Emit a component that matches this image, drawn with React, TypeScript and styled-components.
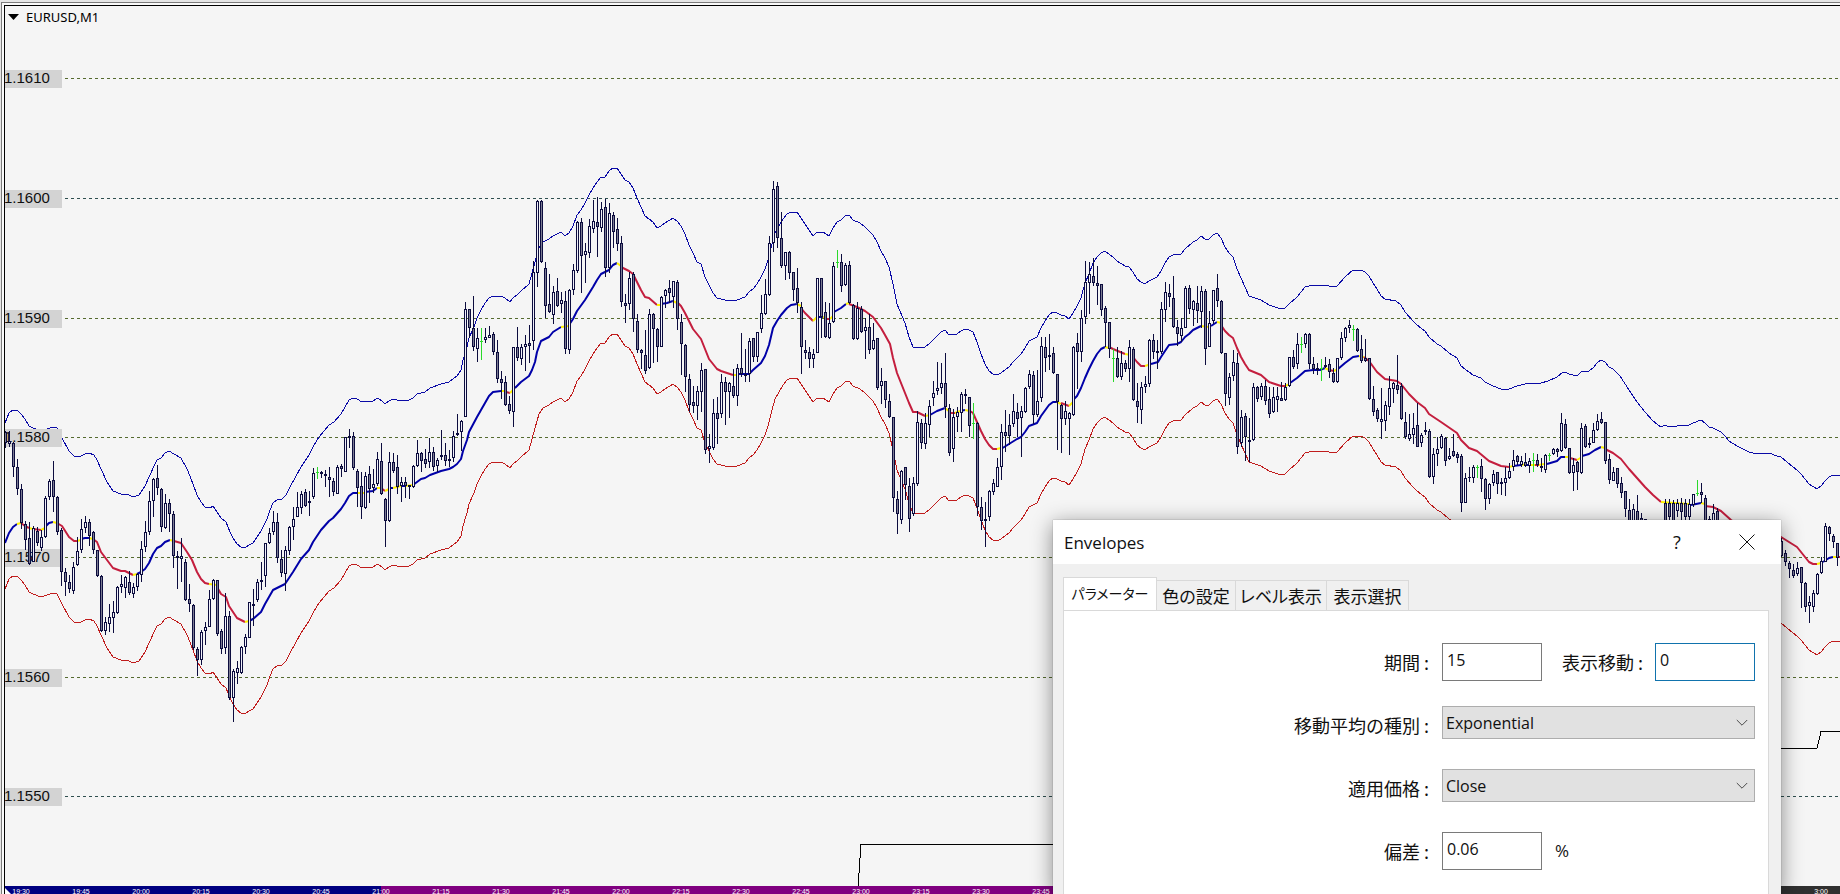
import React from 'react';
import styled, { createGlobalStyle } from 'styled-components';

const GlobalStyle = createGlobalStyle`
  * { box-sizing: border-box; }
  body {
    margin: 0;
    background: #e6e6e6;
    color: #101010;
    font-family: "Open Sans", "Noto Sans CJK JP", sans-serif;
    font-size: 16px;
  }
`;

/* ---------- chart data ---------- */

// Each bar is "high,bodyTop,bodyBottom,low" plus u (rising), d (falling) or g (doji, open = close).
type Run = { start: number; bars: string };

const RUNS: Run[] = [
  {
    start: 5,
    bars: `431,432,443,448d 431,441,444,447u 442,443,467,477d 459,467,489,495d 484,489,523,529d 521,524,540,550d
522,538,564,565d 526,528,562,562u 527,531,543,546d 530,537,548,551u 496,498,537,538u 479,481,497,500u 461,480,497,512d
496,497,532,535d 528,530,572,586d 568,572,582,596d 575,582,589,593d 562,567,591,594u 537,551,565,566u 519,529,550,553u
516,522,528,533u 519,522,536,546d 531,532,550,554d 550,550,576,577d 575,576,631,632d 617,622,631,635u 604,617,624,632u
601,612,618,633u 586,587,613,614u 575,584,587,593u 576,577,588,598u 571,582,593,595d 583,587,594,598u 573,574,587,591u
541,549,575,582u 521,532,547,552u 491,501,532,535u 478,479,501,517u 465,478,488,495d 488,489,527,532d 494,503,528,529u
499,503,514,532d 511,514,556,568d 551,556,558,589d 538,556,559,582u 559,562,600,601d 584,599,604,612d 604,605,648,650d
647,649,660,676d 630,632,660,665u 622,627,631,645u 590,599,627,627u 579,580,599,600u 580,580,634,636d 629,631,649,654d
593,616,648,654u 611,616,698,700d 669,671,698,722u 661,668,673,684u 646,647,673,674u 634,637,647,654u 602,602,638,638u
589,604,606,626d 579,582,600,602u 562,580,582,590u 543,543,576,587u 528,533,543,544u 511,522,532,535u 513,522,558,563d
550,559,573,577d 546,550,574,591u 526,527,551,555u 507,519,527,540u 492,507,517,517u 491,494,508,514u 489,492,506,507d
491,501,503,516u 468,473,497,499u 467,472,472,479g 471,472,474,478d 470,474,476,487d 467,477,480,497d 478,481,492,496d
465,467,494,494u 464,466,469,477d 437,437,472,472u 429,436,438,448d 432,436,468,470d 469,471,488,507d 472,486,507,519d
472,476,508,509u 466,474,489,503d 469,484,488,493u 452,459,484,486u 443,461,494,495d 498,499,521,547d 452,462,521,522u
453,462,471,473d 455,467,487,494d 477,482,486,502u 477,482,486,498d 485,485,487,499d 465,466,487,488u 440,453,466,467u`,
  },
  {
    start: 421,
    bars: `452,453,461,472d 449,459,464,468d 438,452,462,468u 447,452,467,471d 458,460,466,472u 430,455,457,460u
443,455,461,466d 450,459,461,467u 431,436,458,462u 414,433,435,436u 420,421,432,451u 302,309,417,417u 309,309,328,338d
296,328,347,351d 328,338,349,362u 328,341,341,360g 328,337,340,343u 326,335,338,338u 332,334,352,355d 340,352,379,383d
371,379,383,399d 376,382,405,406d 396,404,411,414d 347,347,412,427u 327,347,358,361d 344,347,359,365u 335,344,347,371u
325,343,346,363d 261,272,341,350u 200,201,273,287u 200,201,262,263d 262,268,306,318d 274,304,312,313d 286,292,315,324u
278,291,306,307d 292,300,304,313u 291,301,349,354d 289,290,350,354u 264,270,290,295u 221,222,271,273u 218,222,256,293d
243,251,255,283u 219,226,253,258u 200,221,229,233u 197,222,227,257d 202,209,228,232u 199,207,268,277d 203,213,268,273u
212,215,232,248d 218,229,244,251d 236,243,302,307d 294,303,306,323d 272,278,304,310u 272,274,319,332d 314,321,350,353d
349,350,353,369d 330,355,371,374d 309,314,368,369u 313,314,329,363d 328,329,347,362d 296,297,347,347u 289,290,296,308u
280,288,293,303d 281,281,297,308u 280,282,319,330d 314,322,344,375d 344,345,377,392d 374,379,405,412d 386,402,406,413d
386,391,406,420u 363,370,392,412u 369,369,450,454d 434,446,449,463u 399,413,448,450u 397,413,419,444d 374,382,414,418u
377,382,392,425d 382,383,392,418u 369,386,396,398d 364,368,396,406u 333,368,374,377d 349,374,376,382d 338,341,374,382u
338,338,357,362d 332,332,357,362u 295,313,329,333u 279,294,314,315u 236,243,295,296u 181,189,243,252u 182,186,238,248d
212,238,266,268d 252,252,266,280u 251,252,273,279d 272,272,290,301d 268,288,303,313d`,
  },
  {
    start: 801,
    bars: `302,307,347,374d 340,350,353,359d 347,352,359,368d 349,354,359,368u 278,278,353,353u 278,278,317,338d
302,312,337,338d 303,323,338,339u 262,266,322,323u 250,262,262,268g 254,262,286,292d 263,265,285,286u 261,265,303,304d
304,305,339,340d 302,308,339,340u 306,309,332,333d 318,327,331,359u 314,327,350,354d 323,340,349,350u 338,338,388,390d
368,381,386,404u 381,381,400,408d 394,401,417,418d 417,417,498,512d 491,499,514,534d 470,471,520,524u 467,467,485,500d
478,486,519,532d 477,483,514,516u 411,422,484,486u 419,423,443,449d 413,423,444,449u 400,406,425,437u 381,393,398,406u
362,388,391,395u 363,383,388,394u 353,383,407,418d 404,408,453,456d 409,417,449,462u 407,412,417,432u 392,394,413,432u
389,394,396,404d 397,397,426,437d 403,423,423,439g 422,423,507,516d 497,507,521,530d 502,519,521,547d 490,491,517,521u
479,483,492,495u 458,467,487,487u 424,432,467,480u 410,432,436,452d 414,425,436,445d 394,411,424,427u 403,412,419,437d
406,411,418,457u 387,388,412,413u 370,374,387,389u 371,375,415,424d 370,401,415,417u 337,346,398,402u 337,347,358,372d
334,355,357,370u 347,353,373,374d 374,374,402,450d 404,405,419,453d 401,411,419,425u 412,413,419,455u 346,347,415,416u
333,343,352,389d 310,318,352,362u 261,282,317,324u 262,274,283,314u 258,276,283,286d 266,283,286,305d 284,284,310,316d
306,308,323,347d 322,322,349,358d 349,358,358,382g 347,358,377,378d 351,363,377,380u 360,363,369,372d 340,347,369,382u
347,349,400,401d 383,401,407,423d 382,387,410,424u 376,384,387,393u 339,340,384,387u 334,340,352,359d 340,351,353,369d
302,309,352,354u 282,292,310,322u`,
  },
  {
    start: 1169,
    bars: `284,293,297,307d 276,298,327,328d 320,327,334,346d 318,328,336,342u 286,288,328,328u 285,288,309,314d
300,301,310,326u 286,303,311,323d 286,291,312,328u 289,291,349,365d 311,323,347,347u 290,290,321,324u 274,288,301,307d
300,301,353,354d 353,353,394,406d 373,377,398,405u 350,362,376,381u 353,363,447,454d 410,417,443,447u 413,416,437,461d
418,440,442,462u 383,387,440,441u 386,387,399,402d 383,386,397,400u 380,386,401,405d 387,399,414,418d 387,397,412,413u
387,396,400,412u 382,398,401,401d 383,387,400,401u 357,357,386,387u 350,357,367,369d 333,344,364,369u 337,344,344,353g
333,334,344,348u 333,334,364,369d 357,364,369,374d 363,368,370,375u 359,368,368,381g 357,365,367,368u 359,364,372,378d
368,373,382,383d 358,358,382,383u 332,338,358,360u 327,328,338,342u 320,325,328,333u 325,329,329,341g 328,329,351,352d
335,349,361,363d 339,358,361,362d 358,358,399,400d 386,399,412,416d 408,410,419,422d 388,419,422,439u 401,405,421,431u
376,388,407,415u 382,383,389,403u 355,385,390,394d 383,386,419,420d 412,422,437,439d 414,434,439,441u 413,428,435,444u
403,425,447,447d 433,435,443,447u 422,430,432,435u 429,431,477,478d 448,454,477,484u 437,449,454,466u 434,436,448,449u
437,438,461,466d 448,456,459,460u 434,451,456,457d 452,454,458,463d 454,456,503,512d 473,478,503,503u 467,477,478,482d
465,467,478,483u 465,467,467,478g 459,466,479,492d 478,479,499,510d 483,484,499,504u 470,474,483,486u 472,472,484,494d
478,482,484,495d 467,478,483,496u 463,471,478,479u 450,460,467,471u 455,456,462,465d 456,461,465,467u 453,462,466,467d
458,461,466,473u 453,460,460,472g 454,460,465,467d 458,466,468,472d 454,455,470,473u 453,455,455,461g 448,449,454,455u
448,449,452,457d 413,423,451,452u 419,424,448,449d 448,448,473,474d 458,465,473,491u 461,462,472,490d 423,428,473,474u
424,426,447,448d 438,443,445,448d 423,430,443,443u 414,421,430,431u 412,419,423,424d 422,422,461,464d 454,459,480,484d
467,472,481,481u 468,468,484,488d 477,483,493,498d 491,491,509,517d 499,510,525,530d 504,509,525,530u 495,511,525,530d
513,518,530,534d 519,519,530,534d`,
  },
  {
    start: 1665,
    bars: `499,503,524,530d 499,503,517,525d 500,503,525,530d 499,503,511,517u 498,503,512,525d 499,503,517,525d
499,504,517,520u 494,494,505,507u 480,493,493,496g 483,492,495,503d 495,498,524,530d 516,519,530,532d 504,513,525,530u
508,511,525,530d`,
  },
  {
    start: 1781,
    bars: `538,541,556,557d 550,553,562,566d 561,563,569,578d 564,570,576,578d 562,568,574,576u 567,567,583,608d
582,583,607,612d 596,602,606,623u 590,593,607,612u 573,574,594,595u 557,561,573,574u 523,526,562,562u 526,527,534,541d
534,536,542,548d 543,543,558,566d`,
  },
];

const BAR_STEP = 4;

type Bar = { x: number; high: number; top: number; bottom: number; low: number; kind: string };

const BARS: Bar[] = RUNS.flatMap((run) =>
  run.bars.split(/\s+/).map((token, i) => {
    const [high, top, bottom, low] = token.slice(0, -1).split(',').map(Number);
    return { x: run.start + i * BAR_STEP, high, top, bottom, low, kind: token.slice(-1) };
  }),
);

// Upper envelope band; the lower band runs a fixed distance beneath it.
const BAND_GAP = 166;
const UPPER_BAND = `5,423 9,413 13,410 17,410 21,414 25,419 29,426 33,428 41,431 50,428 53,427 57,428 62,438 69,451 74,456
79,457 85,454 89,453 94,455 97,460 101,469 107,482 113,491 121,494 127,494 133,497 139,495 145,486 150,475 154,466 157,460
161,458 165,453 169,451 174,454 181,458 187,469 190,476 197,495 201,502 205,507 210,508 213,506 217,512 221,518 226,522
230,532 233,538 237,544 241,547 245,548 249,545 253,543 257,537 261,531 267,519 270,510 273,503 277,500 282,499 286,495
290,487 301,467 309,455 313,447 319,437 329,425 334,422 341,414 345,407 349,400 353,398 357,399 362,402 365,401 373,401
378,398 382,401 385,404 389,401 393,399 397,400 409,400 413,398 417,394 425,392 430,388 441,384 449,382 453,379 457,376
461,370 463,360 467,347 469,338 474,327 477,318 481,310 485,303 489,298 493,296 501,296 505,298 510,302 513,298 517,295
521,291 529,284 532,273 535,262 539,248 543,242 549,239 553,236 557,234 561,232 565,236 569,233 573,226 577,215 581,210
585,203 589,195 593,188 597,182 601,177 605,177 609,171 613,168 617,168 621,174 625,180 629,182 633,188 637,198 641,207
645,216 649,219 653,222 657,228 661,226 665,223 673,218 677,221 681,226 685,234 689,245 693,253 697,262 701,264 705,277
709,285 713,293 717,298 725,300 733,301 737,300 745,297 749,292 753,289 757,284 761,277 765,269 768,260 771,248 775,233
779,226 783,219 787,214 791,212 797,212 801,218 805,224 809,230 813,236 817,232 823,232 829,236 833,228 837,222 841,220
845,216 849,215 853,220 860,223 865,227 869,231 873,235 877,242 881,251 885,258 889,267 893,284 897,304 905,323 909,337
913,347 917,347 921,348 925,347 929,344 937,336 941,332 945,330 949,335 957,334 961,331 965,329 969,330 973,332 977,342
981,354 985,364 989,371 993,374 997,375 1001,373 1009,367 1013,362 1017,358 1021,354 1025,348 1029,341 1037,337 1041,328
1045,321 1049,315 1053,312 1057,313 1061,315 1065,316 1069,319 1073,313 1077,306 1081,298 1085,283 1089,274 1093,263
1097,257 1101,253 1105,251 1109,254 1113,257 1117,261 1125,266 1129,267 1133,272 1137,279 1141,282 1145,284 1149,281
1157,277 1161,271 1165,263 1169,257 1173,255 1181,254 1185,249 1193,242 1197,240 1201,236 1205,239 1209,239 1213,235
1217,233 1221,238 1225,247 1229,253 1233,257 1237,269 1241,278 1245,287 1249,296 1261,300 1269,305 1281,309 1285,308
1289,304 1297,297 1305,287 1309,286 1321,285 1329,286 1333,287 1337,286 1345,277 1353,270 1361,270 1365,272 1369,276
1373,283 1377,289 1381,296 1385,299 1396,301 1401,305 1405,312 1413,321 1417,325 1425,331 1429,337 1437,344 1441,346
1449,353 1457,358 1461,366 1469,372 1473,375 1481,378 1485,382 1493,386 1501,389 1509,389 1517,386 1529,383 1541,383
1548,381 1557,377 1563,372 1565,372 1569,374 1577,376 1581,372 1589,371 1593,368 1597,363 1601,360 1605,362 1609,367
1613,369 1620,376 1629,390 1637,402 1645,412 1653,421 1661,427 1665,425 1669,427 1673,426 1677,426 1683,425 1687,426
1693,423 1701,420 1705,423 1709,427 1713,428 1721,432 1725,436 1729,441 1737,446 1749,452 1753,453 1769,453 1777,456
1781,457 1793,467 1797,470 1801,474 1809,484 1817,489 1821,486 1825,481 1829,477 1833,475 1840,475`;

// Moving average, one entry per coloured stretch: B rising, R falling, Y turning.
const AVERAGE = `B 5,543 9,533 13,527 17,524
Y 17,524 21,523
R 21,523 25,526 29,528
Y 29,528 33,529
R 33,529 41,530
Y 41,530 45,528
B 45,527 49,523 53,522
Y 53,522 57,523
R 57,523 62,526 69,537 74,541 77,541
Y 77,541 81,540
B 81,539 85,538 89,538
Y 89,538 93,539
R 93,539 97,542 101,552 107,560 113,568 121,571 125,571 133,575
Y 133,575 137,574
B 137,574 141,572 145,569 149,563 153,554 157,548 161,546 165,542 170,540
Y 170,540 174,541
R 174,541 181,543 187,552 192,560 197,572 201,579 205,583 209,584
Y 209,584 217,585
R 217,587 221,594 226,597 229,606 233,612 237,618 245,622
Y 245,622 249,621
B 249,621 253,619 261,612 265,604 269,597 273,590 277,588 285,584 289,578 293,572 301,559 309,550 313,542 321,530 329,521 333,518 341,509 345,503 349,496 353,493 357,493
Y 357,493 365,493
B 365,492 373,491 377,488
Y 377,488 381,488
R 381,488 385,491
Y 385,491 389,489
B 389,488 393,488
Y 393,488 401,486
B 401,486 405,486
Y 405,486 413,485
B 413,485 417,482 421,479 425,478 430,475 441,471 449,469 453,467 457,464 461,459 463,451 467,440 469,432 477,417 481,410 485,403 489,396 493,392 501,391
Y 501,391 506,391
R 506,392 510,393
Y 510,393 515,388
B 515,388 521,382 525,379 529,376 532,370 535,362 537,352 541,341 549,337 553,332 561,327
Y 561,327 569,326
B 569,325 573,319 577,311 585,300 593,287 597,280 601,274 609,270 613,265 617,263
Y 617,263 621,266
R 621,267 629,271 633,274 637,282 641,290 645,297 649,298 657,305
Y 657,305 661,305
B 661,304 667,303 673,301
Y 673,301 677,303
R 677,302 681,306 685,313 689,321 693,329 701,339 705,349 709,359 713,364 717,369 721,371 733,375
Y 733,375 737,375
B 737,374 749,374 753,370 761,363 765,356 769,345 773,328 777,321 781,315 787,308 791,305 797,304
Y 797,304 801,306
R 801,308 805,313 809,317 813,321
Y 813,321 817,317
B 817,317 823,317
Y 823,317 827,318
R 827,319 830,319
Y 830,319 834,315
B 834,312 841,308 846,304
Y 846,304 849,303
R 849,304 857,307 865,311 873,317 881,328 885,335 890,344 893,358 897,373 905,393 909,403 913,412 917,412 925,416
Y 925,416 930,415
B 930,415 937,411 945,408
Y 945,408 950,412
R 950,413 955,413
Y 955,413 960,411
B 960,411 965,410
Y 965,410 970,411
R 970,411 973,413 977,422 981,431 985,439 989,445 993,449 997,449
Y 997,449 1001,448
B 1001,449 1009,444 1017,439 1021,437 1025,432 1029,426 1037,423 1041,416 1049,405 1053,402 1057,402
Y 1057,402 1061,404
R 1061,403 1069,406
Y 1069,406 1073,402
B 1073,400 1077,396 1081,388 1085,378 1089,369 1093,361 1097,354 1101,349 1105,347
Y 1105,347 1109,348
R 1109,347 1113,349 1125,354
Y 1125,354 1131,355
R 1133,357 1137,362 1141,366 1145,366
Y 1145,366 1151,364
B 1151,364 1158,362 1161,357 1165,351 1169,345 1177,344 1181,342 1185,337 1189,334 1193,330 1201,326
Y 1201,326 1209,327
B 1211,326 1217,322
Y 1217,322 1222,323
R 1221,325 1225,331 1229,335 1233,338 1237,348 1241,357 1245,364 1249,370 1261,375 1269,382 1281,386 1285,386
Y 1285,386 1290,384
B 1290,383 1297,378 1305,371 1313,370 1320,370 1325,368
Y 1325,368 1329,370
R 1329,370 1334,371
Y 1334,371 1338,369
B 1338,369 1345,363 1353,357 1359,356
Y 1359,356 1364,357
R 1364,357 1369,361 1377,372 1385,379 1397,381 1401,384 1409,394 1417,402 1425,408 1429,414 1441,422 1457,433 1461,440 1469,448 1477,451 1489,461 1501,466 1509,467
Y 1509,467 1513,466
B 1513,466 1521,465
Y 1521,465 1527,464
B 1527,465 1531,465
Y 1531,465 1535,465
R 1535,465 1539,465
Y 1539,465 1544,464
B 1547,464 1557,461 1561,457 1565,457
Y 1565,457 1569,457
R 1570,458 1577,460
Y 1577,460 1582,457
B 1582,456 1589,454 1595,450 1601,447
Y 1601,447 1605,448
R 1605,449 1613,453 1621,459 1629,469 1645,487 1653,495 1661,502
Y 1661,502 1689,504
B 1691,505 1701,503
Y 1701,503 1705,504
R 1705,506 1713,507 1721,511 1731,520 1745,529 1765,532 1781,537 1789,542 1797,547 1805,557 1809,562 1813,564 1817,564
Y 1817,564 1821,563
B 1823,562 1829,558 1833,557
Y 1833,557 1837,557
R 1837,557 1840,557`
  .split('\n')
  .map((line) => ({ trend: line[0], points: line.slice(2) }));

const TREND_COLORS: Record<string, string> = { B: '#0000a8', R: '#c41e3e', Y: '#fff200' };

const PRICE_LEVELS = [
  { label: '1.1610', y: 78, major: false },
  { label: '1.1600', y: 198, major: true },
  { label: '1.1590', y: 318, major: false },
  { label: '1.1580', y: 437, major: false },
  { label: '1.1570', y: 557, major: false },
  { label: '1.1560', y: 677, major: false },
  { label: '1.1550', y: 796, major: true },
];

const EVENING_TIMES = [
  '19:30', '19:45', '20:00', '20:15', '20:30', '20:45', '21:00', '21:15', '21:30',
  '21:45', '22:00', '22:15', '22:30', '22:45', '23:00', '23:15', '23:30', '23:45',
];
const NIGHT_TIMES = ['3:00'];

/* ---------- chart window ---------- */

const Page = styled.main`
  position: relative;
  height: 100vh;
  overflow: hidden;
  padding: 2px 0 0 1px;
`;

const Frame = styled.section`
  height: 100%;
  padding: 2px 0 0 2px;
  border: solid #7c7c7c;
  border-width: 1px 0 0 1px;
  background: #fafafa;
`;

const ChartWindow = styled.div`
  display: flex;
  flex-direction: column;
  height: 100%;
  border: solid #000;
  border-width: 1px 0 0 1px;
  background: #f5f5f5;
`;

const ChartHeader = styled.header`
  display: flex;
  flex: none;
  align-items: center;
  gap: 7px;
  height: 24px;
  padding: 0 0 3px 3px;
`;

const SymbolName = styled.h1`
  margin: 0;
  font: 400 13px/16px "Noto Sans", sans-serif;
  color: #000;
`;

const Plot = styled.svg`
  display: block;
  flex: 1;
  width: 100%;
  min-height: 0;
  shape-rendering: crispEdges;
`;

const PriceText = styled.text`
  font: 15px "Liberation Sans", sans-serif;
  fill: #101010;
`;

const AverageLine = styled.polyline`
  stroke-width: 2px;
  stroke-linejoin: round;
  shape-rendering: geometricPrecision;
`;

const TimeAxis = styled.footer`
  display: flex;
  flex: none;
  height: 8px;
  overflow: hidden;
  background: linear-gradient(90deg, #000080 376px, #800080 376px, #800080 1096px, #303030 1096px);
`;

const TimeGroup = styled.div<{ $skip?: number }>`
  display: flex;
  gap: 28px;
  margin-left: ${(p) => (p.$skip ? p.$skip * 60 + 28 : 0)}px;
`;

const TimeMark = styled.span`
  width: 32px;
  flex: none;
  padding-top: 2px;
  text-align: center;
  font: 7px/8px "Liberation Sans", sans-serif;
  color: #fff;
`;

const ScrollMark = styled.svg`
  flex: none;
  width: 7px;
  height: 8px;
  margin-right: -7px;
`;

function Candle({ bar }: { bar: Bar }) {
  const { x, high, top, bottom, low, kind } = bar;
  if (kind === 'g') {
    return (
      <g fill="#2bd92b">
        <rect x={x} y={high} width={1} height={low - high} />
        <rect x={x - 1} y={top} width={3} height={1} />
      </g>
    );
  }
  return (
    <g fill="#0c0c3e">
      <rect x={x} y={high} width={1} height={Math.max(low - high, 1)} />
      <rect x={x - 1} y={top} width={3} height={Math.max(bottom - top, 1)} />
      {bottom - top > 2 && (
        <rect x={x} y={top + 1} width={1} height={bottom - top - 2} fill={kind === 'u' ? '#f0f0fa' : '#7c7c92'} />
      )}
    </g>
  );
}

function PriceChart() {
  return (
    <Plot role="img" aria-label="EURUSD M1">
      <g transform="translate(-5 -30)">
        {PRICE_LEVELS.map((level) => (
          <line
            key={level.label}
            x1={65}
            x2="110%"
            y1={level.y + 0.5}
            y2={level.y + 0.5}
            stroke={level.major ? '#2f4f4f' : '#556b2f'}
            strokeDasharray="3 3"
          />
        ))}
        <g fill="none">
          <polyline points={UPPER_BAND} stroke="#0a0aa6" />
          <polyline points={UPPER_BAND} stroke="#c01c1c" transform={`translate(0 ${BAND_GAP})`} />
          {AVERAGE.map((part, i) => (
            <AverageLine key={i} points={part.points} stroke={TREND_COLORS[part.trend]} />
          ))}
          <polyline points="858,887 861,844.5 1500,844.5 1504,748.5 1817,748.5 1821,731.5 1840,731.5" stroke="#000" />
        </g>
        {PRICE_LEVELS.map((level) => (
          <g key={level.label}>
            <rect x={5} y={level.y - 8} width={57} height={18} fill="#d3d3d3" />
            <PriceText x={4} y={level.y + 5}>{level.label}</PriceText>
          </g>
        ))}
        {BARS.map((bar, i) => (
          <Candle key={i} bar={bar} />
        ))}
      </g>
    </Plot>
  );
}

/* ---------- dialog ---------- */

const Dialog = styled.section`
  position: absolute;
  top: 520px;
  right: 59px;
  bottom: 0;
  display: flex;
  flex-direction: column;
  width: 728px;
  background: #f0f0f0;
  box-shadow: 0 4px 20px rgba(0, 0, 0, 0.45), 0 0 1px rgba(0, 0, 0, 0.4);
`;

const TitleBar = styled.header`
  display: flex;
  flex: none;
  align-items: center;
  height: 44px;
  padding: 0 18px 0 11px;
  background: #fff;
`;

const DialogTitle = styled.h2`
  flex: 1;
  margin: 0;
  font-size: 17px;
  font-weight: 400;
`;

const TitleButton = styled.button`
  display: grid;
  place-items: center;
  width: 32px;
  height: 32px;
  padding: 0;
  border: 0;
  background: none;
  font: 18px/32px "Open Sans", sans-serif;
  color: #101010;
`;

const TitleButtons = styled.div`
  display: flex;
  gap: 38px;
`;

const Body = styled.div`
  display: flex;
  flex: 1;
  flex-direction: column;
  min-height: 0;
  padding: 13px 12px 0 10px;
`;

const Tabs = styled.div`
  display: flex;
  flex: none;
  align-items: flex-end;
  height: 33px;
`;

const Tab = styled.button<{ $active?: boolean; $width: number }>`
  width: ${(p) => p.$width}px;
  height: ${(p) => (p.$active ? 34 : 31)}px;
  margin-bottom: -1px;
  padding: 0 0 ${(p) => (p.$active ? 2 : 0)}px;
  border: 1px solid #d9d9d9;
  border-left-width: ${(p) => (p.$active ? 1 : 0)}px;
  border-bottom-color: ${(p) => (p.$active ? '#fff' : '#d9d9d9')};
  background: ${(p) => (p.$active ? '#fff' : '#f0f0f0')};
  font: ${(p) => (p.$active ? 14 : 17)}px/24px "Noto Sans CJK JP", sans-serif;
  font-feature-settings: "palt";
  white-space: nowrap;
  color: #101010;
`;

const Panel = styled.form`
  display: flex;
  flex: 1;
  flex-direction: column;
  gap: 25px;
  padding: 32px 13px 0 20px;
  border: solid #d9d9d9;
  border-width: 1px 1px 0;
  background: #fff;
`;

const Row = styled.div`
  display: grid;
  flex: none;
  grid-template-columns: 1fr 313px;
  gap: 13px;
  height: 38px;
`;

const Controls = styled.div`
  display: flex;
  align-items: flex-start;
`;

const Label = styled.label`
  font: 18px/38px "Noto Sans CJK JP", sans-serif;
  white-space: nowrap;
  text-align: right;
`;

const ShiftLabel = styled(Label)`
  flex: 1;
  padding-right: 12px;
`;

const Unit = styled.span`
  padding-left: 13px;
  font-size: 17px;
  line-height: 38px;
`;

const Field = styled.input<{ $focused?: boolean }>`
  width: 100px;
  height: 38px;
  padding: 0 5px 4px 4px;
  border: 1px solid ${(p) => (p.$focused ? '#1173ad' : '#7a7a7a')};
  border-radius: 0;
  outline: none;
  background: #fff;
  font: 16px "Open Sans", sans-serif;
  color: #101010;
`;

const SelectBox = styled.div`
  display: grid;
  align-items: center;
  width: 100%;
  height: 33px;
`;

const Select = styled.select`
  grid-area: 1 / 1;
  width: 100%;
  height: 33px;
  padding: 0 32px 0 3px;
  border: 1px solid #adadad;
  border-radius: 0;
  background: #e1e1e1;
  appearance: none;
  font: 16px "Open Sans", sans-serif;
  color: #101010;
`;

const Chevron = styled.svg`
  grid-area: 1 / 1;
  justify-self: end;
  margin-right: 7px;
  pointer-events: none;
`;

function Dropdown({ id, options }: { id: string; options: string[] }) {
  return (
    <SelectBox>
      <Select id={id} defaultValue={options[0]}>
        {options.map((option) => (
          <option key={option}>{option}</option>
        ))}
      </Select>
      <Chevron width="12" height="8" viewBox="0 0 12 8" fill="none" stroke="#4a4a4a" aria-hidden="true">
        <path d="M0.8 1 L6 6.2 L11.2 1" />
      </Chevron>
    </SelectBox>
  );
}

function EnvelopesDialog() {
  return (
    <Dialog role="dialog" aria-labelledby="dialog-title">
      <TitleBar>
        <DialogTitle id="dialog-title">Envelopes</DialogTitle>
        <TitleButtons>
          <TitleButton type="button">?</TitleButton>
          <TitleButton type="button" aria-label="閉じる">
            <svg width="16" height="16" viewBox="0 0 16 16" stroke="#101010" fill="none" aria-hidden="true">
              <path d="M0.5 0.5 L15.5 15.5 M15.5 0.5 L0.5 15.5" />
            </svg>
          </TitleButton>
        </TitleButtons>
      </TitleBar>
      <Body>
        <Tabs role="tablist">
          <Tab type="button" role="tab" aria-selected="true" $active $width={94}>パラメーター</Tab>
          <Tab type="button" role="tab" $width={79}>色の設定</Tab>
          <Tab type="button" role="tab" $width={91}>レベル表示</Tab>
          <Tab type="button" role="tab" $width={82}>表示選択</Tab>
        </Tabs>
        <Panel>
          <Row>
            <Label htmlFor="period">期間 :</Label>
            <Controls>
              <Field id="period" defaultValue="15" />
              <ShiftLabel htmlFor="shift">表示移動 :</ShiftLabel>
              <Field id="shift" defaultValue="0" $focused />
            </Controls>
          </Row>
          <Row>
            <Label htmlFor="method">移動平均の種別 :</Label>
            <Dropdown id="method" options={['Exponential']} />
          </Row>
          <Row>
            <Label htmlFor="price">適用価格 :</Label>
            <Dropdown id="price" options={['Close']} />
          </Row>
          <Row>
            <Label htmlFor="deviation">偏差 :</Label>
            <Controls>
              <Field id="deviation" defaultValue="0.06" />
              <Unit>%</Unit>
            </Controls>
          </Row>
        </Panel>
      </Body>
    </Dialog>
  );
}

export default function App() {
  return (
    <Page lang="ja">
      <GlobalStyle />
      <Frame>
        <ChartWindow>
          <ChartHeader>
            <svg width="11" height="6" viewBox="0 0 11 6" aria-hidden="true">
              <path d="M0 0 H11 L5.5 6 Z" fill="#000" />
            </svg>
            <SymbolName>EURUSD,M1</SymbolName>
          </ChartHeader>
          <PriceChart />
          <TimeAxis>
            <ScrollMark viewBox="0 0 7 8" aria-hidden="true">
              <path d="M0 2 L6 8 H0 Z" fill="#fff" />
            </ScrollMark>
            <TimeGroup>
              {EVENING_TIMES.map((time) => (
                <TimeMark key={time}>{time}</TimeMark>
              ))}
            </TimeGroup>
            <TimeGroup $skip={12}>
              {NIGHT_TIMES.map((time) => (
                <TimeMark key={time}>{time}</TimeMark>
              ))}
            </TimeGroup>
          </TimeAxis>
        </ChartWindow>
      </Frame>
      <EnvelopesDialog />
    </Page>
  );
}
